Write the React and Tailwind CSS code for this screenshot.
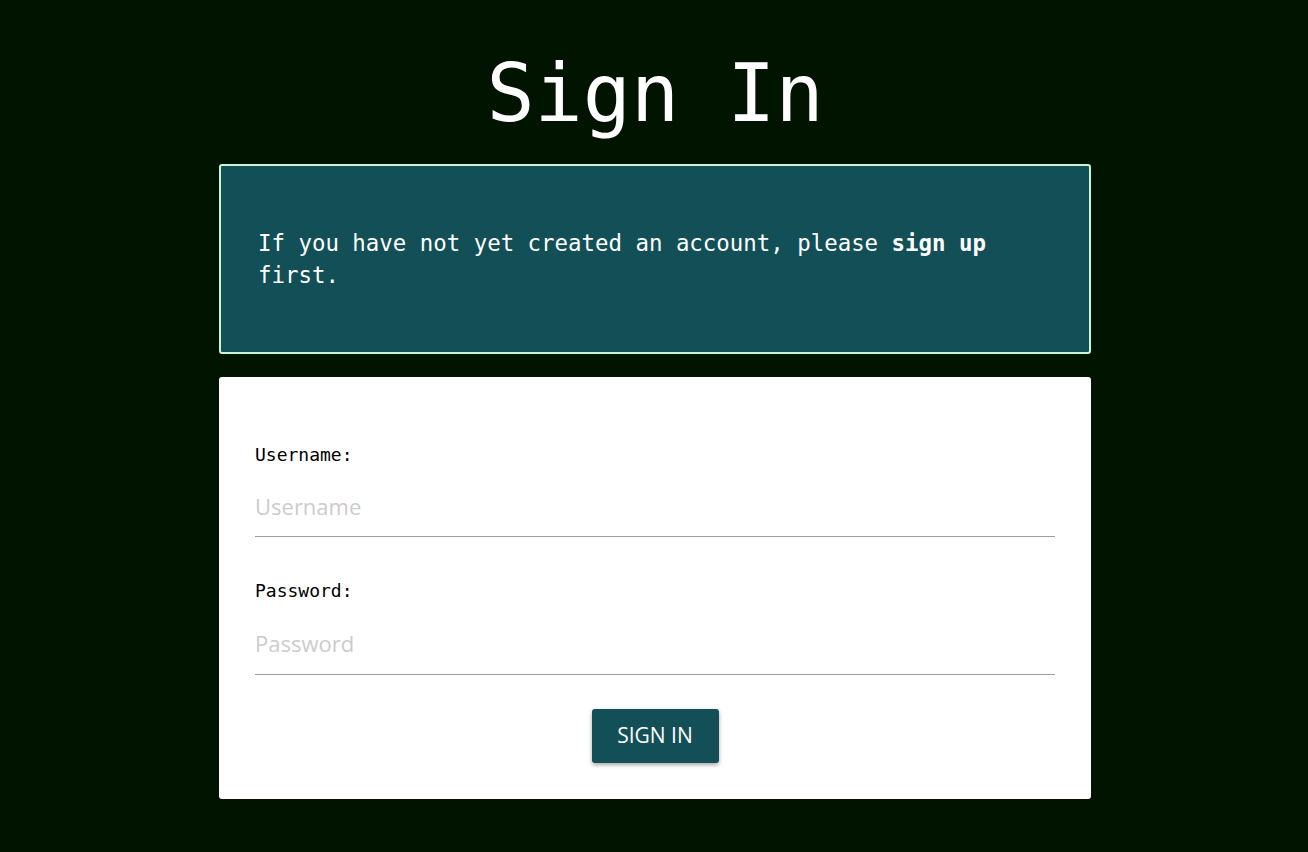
import React from "react";

export default function App() {
  const mono = { fontFamily: '"DejaVu Sans Mono", "Liberation Mono", monospace' };
  const sans = { fontFamily: '"Open Sans", "Noto Sans", sans-serif' };
  return (
    <div className="min-h-screen w-full bg-[#001400] flex flex-col items-center pt-[54px] pl-[2px]" style={mono}>
      <h1 className="text-[80px] leading-[80px] text-white font-normal m-0">Sign In</h1>
      <div className="mt-[30px] w-[872px] border-2 border-[#c6f6d5] rounded-[3px] bg-[#124f57] px-[37px] py-[61px]">
        <p className="text-[22.4px] leading-[32px] text-white">
          If you have not yet created an account, please <b className="font-bold">sign up</b> first.
        </p>
      </div>
      <div className="mt-[23px] w-[872px] bg-white rounded-[3px] px-[36px] pt-[66px] pb-[36px] flex flex-col">
        <label className="block text-[18px] leading-[24px] text-black">Username:</label>
        <input
          className="mt-[8px] h-[62px] w-full border-0 border-b border-[#9e9e9e] outline-none text-[22px] placeholder:text-[#cccccc] bg-transparent"
          style={sans}
          placeholder="Username"
        />
        <label className="block mt-[42px] text-[18px] leading-[24px] text-black">Password:</label>
        <input
          type="password"
          className="mt-[8px] h-[64px] w-full border-0 border-b border-[#9e9e9e] outline-none text-[22px] placeholder:text-[#cccccc] bg-transparent"
          style={sans}
          placeholder="Password"
        />
        <div className="flex justify-center mt-[34px]">
          <button
            className="w-[127px] h-[54px] bg-[#124f57] text-white text-[21px] rounded-[3px] shadow-[0_2px_4px_rgba(0,0,0,0.35)] uppercase"
            style={sans}
          >
            Sign In
          </button>
        </div>
      </div>
    </div>
  );
}
